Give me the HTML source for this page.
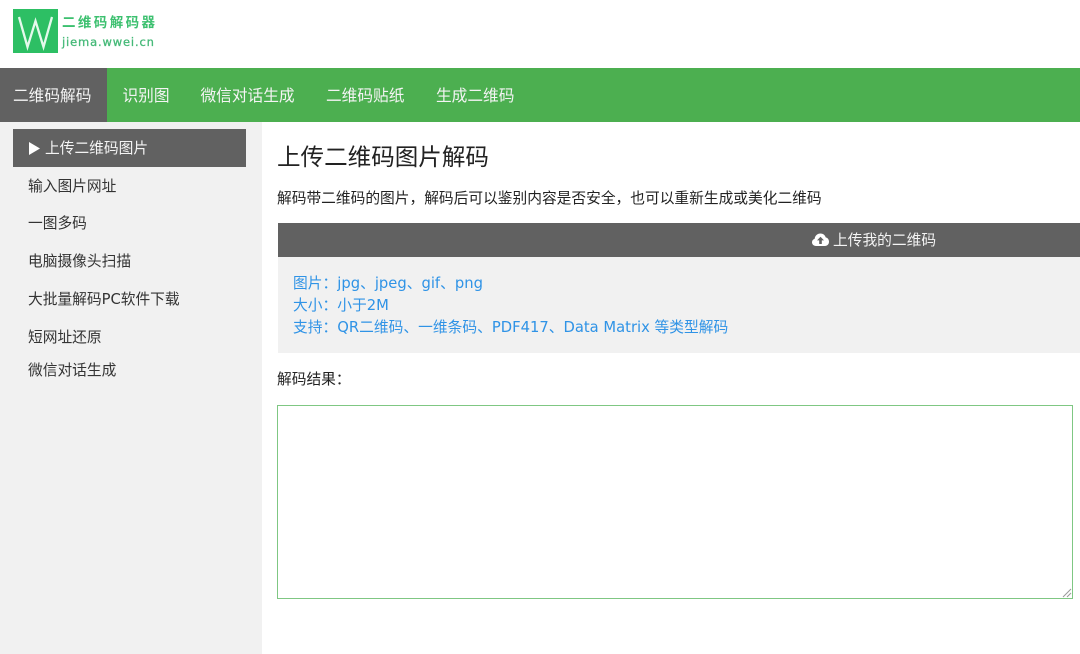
<!DOCTYPE html>
<html lang="zh-CN"><head><meta charset="utf-8"><title>二维码解码器</title>
<style>
*{box-sizing:border-box}
html,body{margin:0;padding:0;background:#fff}
body{width:1080px;height:654px;position:relative;overflow:hidden;font-family:"DejaVu Sans","Noto Sans CJK SC",sans-serif;color:#111}
.a{position:absolute;white-space:nowrap}
.t{font-size:14.73px;line-height:20px}
.n{font-size:15.7px;line-height:20px;color:#f4f4f4;top:86px}
.s{left:28px;font-size:14.73px;line-height:20px;color:#333}
.b{left:293px;font-size:14.75px;line-height:22px;color:#2f93e6}
</style></head><body>
<div class="a" style="left:13px;top:9px;width:45px;height:44px;background:#2dbf64"></div>
<svg class="a" style="left:13px;top:9px" width="45" height="44"><path d="M6 8 L14.500 38 L22.500 12 L30.500 38 L39 8" fill="none" stroke="#e4f9ec" stroke-width="2.300"/></svg>
<div class="a" style="left:62px;top:15px;font-size:13.5px;line-height:17px;letter-spacing:2.4px;color:#3cc06f;font-weight:700">二维码解码器</div>
<div class="a" style="left:62px;top:34px;font-size:11.5px;line-height:16px;letter-spacing:.85px;color:#45b978;-webkit-text-stroke:.3px #45b978">jiema.wwei.cn</div>

<div class="a" style="left:0;top:68px;width:1080px;height:54px;background:#4caf50"></div>
<div class="a" style="left:0;top:68px;width:107px;height:54px;background:#616161"></div>
<div class="a n" style="left:13px">二维码解码</div>
<div class="a n" style="left:122.500px">识别图</div>
<div class="a n" style="left:200.500px">微信对话生成</div>
<div class="a n" style="left:326px">二维码贴纸</div>
<div class="a n" style="left:436px">生成二维码</div>

<div class="a" style="left:0;top:122px;width:262px;height:532px;background:#f1f1f1"></div>
<div class="a" style="left:13px;top:129px;width:233px;height:38px;background:#616161"></div>
<svg class="a" style="left:28px;top:142px" width="13" height="13"><path d="M1 0 L12 6.500 L1 13Z" fill="#fff"/></svg>
<div class="a s" style="left:45px;top:139px;color:#f4f4f4">上传二维码图片</div>
<div class="a s" style="top:177px">输入图片网址</div>
<div class="a s" style="top:214px">一图多码</div>
<div class="a s" style="top:252px">电脑摄像头扫描</div>
<div class="a s" style="top:290px">大批量解码PC软件下载</div>
<div class="a s" style="top:328px">短网址还原</div>
<div class="a s" style="top:361px">微信对话生成</div>

<div class="a" style="left:277px;top:140px;font-size:23.55px;line-height:34px;color:#222">上传二维码图片解码</div>
<div class="a t" style="left:277px;top:189px;color:#222">解码带二维码的图片，解码后可以鉴别内容是否安全，也可以重新生成或美化二维码</div>

<div class="a" style="left:278px;top:223px;width:802px;height:34px;background:#616161"></div>
<svg class="a" style="left:812px;top:233px" width="17" height="14" viewBox="0 0 17 14"><path d="M4 13 C1.500 13 0 11.300 0 9.300 C0 7.600 1 6.400 2.600 5.900 C3 2.600 5.400 .5 8.400 .5 C11 .5 13 2 13.700 4.400 C15.700 4.800 17 6.600 17 8.800 C17 11.300 15.300 13 13 13Z" fill="#fff"/><path d="M8.500 3.800 L12 7.400 H9.800 V11 H7.200 V7.400 H5Z" fill="#616161"/></svg>
<div class="a t" style="left:833px;top:231px;color:#f4f4f4">上传我的二维码</div>

<div class="a" style="left:278px;top:257px;width:802px;height:96px;background:#f1f1f1"></div>
<div class="a b" style="top:273px">图片：jpg、jpeg、gif、png</div>
<div class="a b" style="top:295px">大小：小于2M</div>
<div class="a b" style="top:317px">支持：QR二维码、一维条码、PDF417、Data Matrix 等类型解码</div>

<div class="a t" style="left:277px;top:370px;color:#222">解码结果：</div>
<div class="a" style="left:277px;top:405px;width:796px;height:194px;border:1px solid #7fc783;background:#fff"></div>
<svg class="a" style="left:1062px;top:587px" width="10" height="11"><path d="M1 10 L9 2 M5 10 L9 6" stroke="#999" stroke-width="1" fill="none"/></svg>
</body></html>
